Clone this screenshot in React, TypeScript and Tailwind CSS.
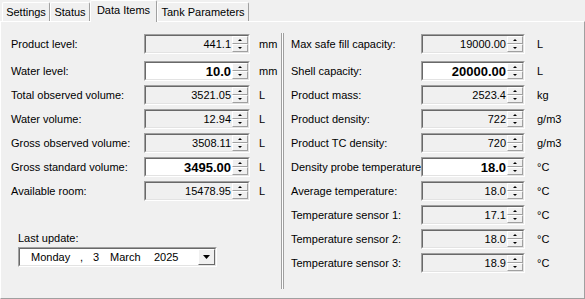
import React from "react";

const font = "font-['Liberation_Sans',Arial,sans-serif]";

type Row = { label: string; value: string; unit: string; edit?: boolean };

const leftRows: Row[] = [
  { label: "Product level:", value: "441.1", unit: "mm" },
  { label: "Water level:", value: "10.0", unit: "mm", edit: true },
  { label: "Total observed volume:", value: "3521.05", unit: "L" },
  { label: "Water volume:", value: "12.94", unit: "L" },
  { label: "Gross observed volume:", value: "3508.11", unit: "L" },
  { label: "Gross standard volume:", value: "3495.00", unit: "L", edit: true },
  { label: "Available room:", value: "15478.95", unit: "L" },
];

const rightRows: Row[] = [
  { label: "Max safe fill capacity:", value: "19000.00", unit: "L" },
  { label: "Shell capacity:", value: "20000.00", unit: "L", edit: true },
  { label: "Product mass:", value: "2523.4", unit: "kg" },
  { label: "Product density:", value: "722", unit: "g/m3" },
  { label: "Product TC density:", value: "720", unit: "g/m3" },
  { label: "Density probe temperature", value: "18.0", unit: "°C", edit: true },
  { label: "Average temperature:", value: "18.0", unit: "°C" },
  { label: "Temperature sensor 1:", value: "17.1", unit: "°C" },
  { label: "Temperature sensor 2:", value: "18.0", unit: "°C" },
  { label: "Temperature sensor 3:", value: "18.9", unit: "°C" },
];

function SpinBtn({ up }: { up?: boolean }) {
  return (
    <div className="flex-1 flex items-center justify-center bg-[#f0f0f0] border border-t-white border-l-white border-r-[#a0a0a0] border-b-[#a0a0a0]">
      <svg width="4" height="2" viewBox="0 0 4 2">
        {up ? <polygon points="2,0 4,2 0,2" fill="#000" /> : <polygon points="0,0 4,0 2,2" fill="#000" />}
      </svg>
    </div>
  );
}

function NumBox({ value, edit, width }: { value: string; edit?: boolean; width: string }) {
  return (
    <div className={`${width} h-[20px] shrink-0 border border-t-[#a0a0a0] border-l-[#a0a0a0] border-b-white border-r-white`}>
      <div
        className={`h-full flex items-center border border-t-[#696969] border-l-[#696969] border-b-[#e3e3e3] border-r-[#e3e3e3] ${
          edit ? "bg-white" : "bg-[#f0f0f0]"
        }`}
      >
        <span className={`flex-1 text-right pr-[1px] leading-none text-black ${edit ? "font-bold text-[13px]" : "text-[11px]"}`}>
          {value}
        </span>
        <div className="flex flex-col w-[16px] h-[16px] shrink-0">
          <SpinBtn up />
          <SpinBtn />
        </div>
      </div>
    </div>
  );
}

function Tab({ label, width, active }: { label: string; width: string; active?: boolean }) {
  return (
    <div
      className={`${width} flex justify-center rounded-t-[2px] border-t border-l border-r border-t-white border-l-white border-r-[#a0a0a0] bg-[#f0f0f0] ${
        active ? "relative z-10 h-[22px] -mb-[1px] pt-[3px]" : "h-[19px] pt-[3px]"
      }`}
    >
      <span className="text-[11px] leading-[13px]">{label}</span>
    </div>
  );
}

function FieldRow({ row, labelW, boxW, unitGap, first }: { row: Row; labelW: string; boxW: string; unitGap: string; first?: boolean }) {
  return (
    <div className={`flex items-center h-[20px] ${first ? "mb-[7px]" : "mb-[4px]"}`}>
      <span className={`${labelW} shrink-0 whitespace-nowrap text-[11px] leading-[13px]`}>{row.label}</span>
      <NumBox value={row.value} edit={row.edit} width={boxW} />
      <span className={`${unitGap} text-[11px] leading-[13px]`}>{row.unit}</span>
    </div>
  );
}

export default function App() {
  return (
    <div className={`w-[585px] h-[299px] bg-[#f0f0f0] text-black flex flex-col ${font}`}>
      {/* Tab strip */}
      <div className="h-[21px] flex items-end pl-[2px]">
        <Tab label="Settings" width="w-[48px]" />
        <Tab label="Status" width="w-[40px]" />
        <Tab label="Data Items" width="w-[67px]" active />
        <Tab label="Tank Parameters" width="w-[92px]" />
      </div>

      {/* Page */}
      <div className="flex-1 flex border-t border-l border-r border-b border-t-white border-l-white border-r-[#a0a0a0] border-b-[#a0a0a0]">
        {/* Left column */}
        <div className="w-[280px] flex flex-col pt-[12px] pl-[10px]">
          {leftRows.map((r, i) => (
            <FieldRow key={r.label} row={r} first={i === 0} labelW="w-[133px]" boxW="w-[106px]" unitGap="ml-[9px]" />
          ))}
          <span className="ml-[7px] mt-[27px] text-[11px] leading-[13px]">Last update:</span>
          <div className="ml-[7px] mt-[2px] w-[199px] h-[20px] border border-t-[#a0a0a0] border-l-[#a0a0a0] border-b-white border-r-white">
            <div className="h-full flex items-center bg-white border border-t-[#696969] border-l-[#696969] border-b-[#e3e3e3] border-r-[#e3e3e3] pl-[11px]">
              <span className="w-[49px] text-[11px]">Monday</span>
              <span className="w-[13px] text-[11px]">,</span>
              <span className="w-[17px] text-[11px]">3</span>
              <span className="w-[44px] text-[11px]">March</span>
              <span className="flex-1 text-[11px]">2025</span>
              <div className="w-[17px] h-[16px] flex items-center justify-center bg-[#f0f0f0] border border-t-white border-l-white border-r-[#696969] border-b-[#696969]">
                <svg width="7" height="4" viewBox="0 0 7 4">
                  <polygon points="0,0 7,0 3.5,4" fill="#000" />
                </svg>
              </div>
            </div>
          </div>
        </div>

        {/* Separator */}
        <div className="w-[3px] mt-[11px] mb-[9px] bg-white border-l border-r border-l-[#a0a0a0] border-r-[#a0a0a0]" />

        {/* Right column */}
        <div className="flex-1 flex flex-col pt-[12px] pl-[7px]">
          {rightRows.map((r, i) => (
            <FieldRow key={r.label} row={r} first={i === 0} labelW="w-[130px]" boxW="w-[104px]" unitGap="ml-[12px]" />
          ))}
        </div>
      </div>
    </div>
  );
}
